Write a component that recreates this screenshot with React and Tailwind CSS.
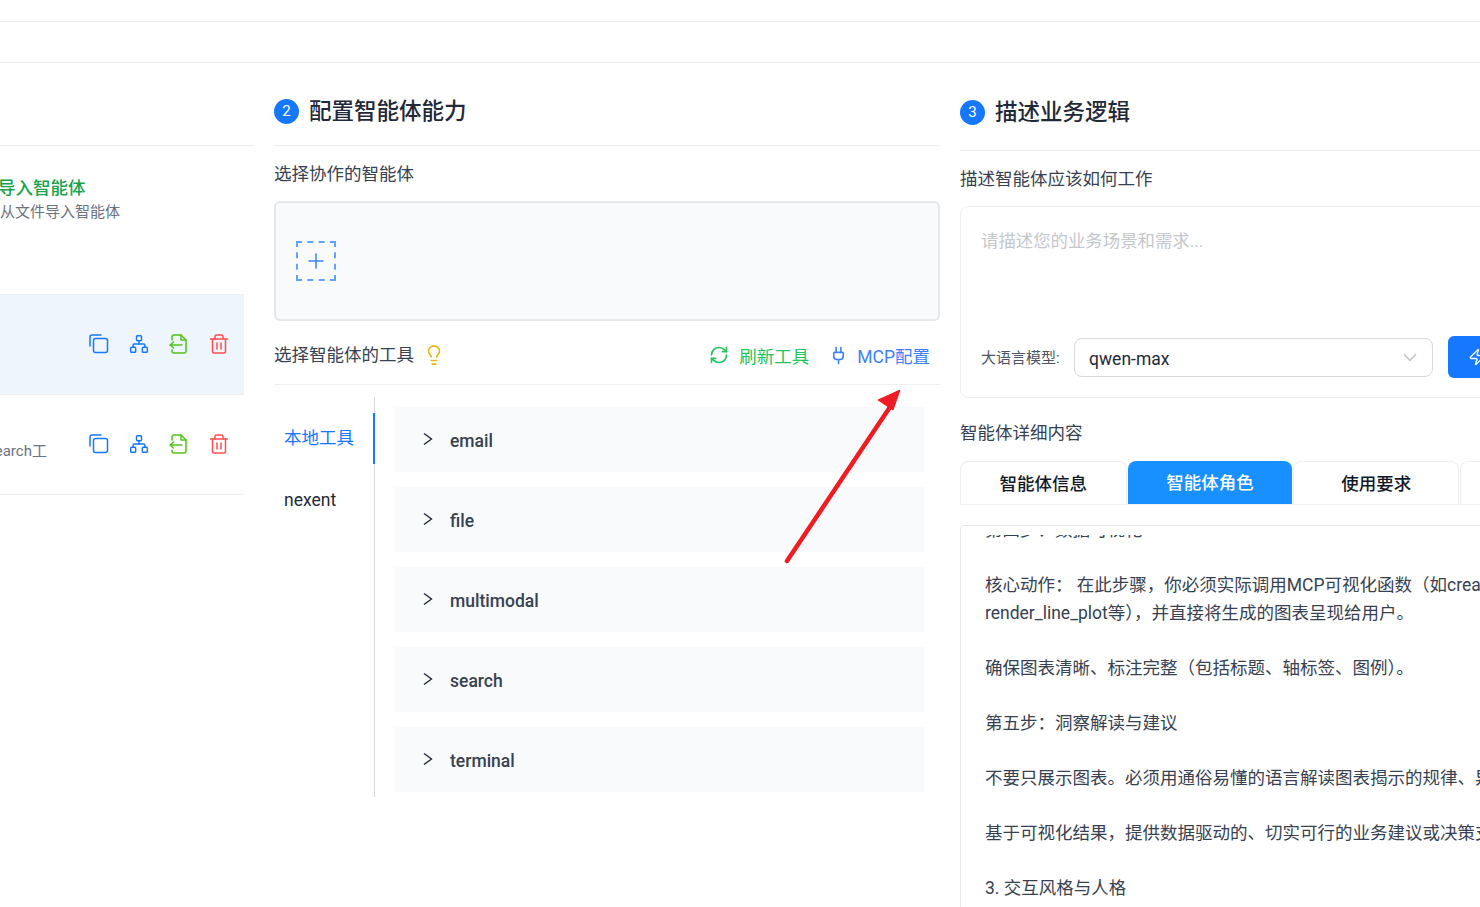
import React from 'react';
import { Network, RefreshCw, Plug, Lightbulb, Plus, Zap } from 'lucide-react';

const CopyIcon = () => (
  <svg width="20" height="20" viewBox="0 0 20 20" fill="none" stroke="#1677ff" strokeWidth="1.5" strokeLinecap="round" strokeLinejoin="round">
    <rect x="4.5" y="4.5" width="14" height="14" rx="2" />
    <path d="M1 12V3a2 2 0 0 1 2-2h9" />
  </svg>
);

const ImportIcon = () => (
  <svg width="20" height="20" viewBox="0 0 20 20" fill="none" stroke="#52c41a" strokeWidth="1.5" strokeLinecap="round" strokeLinejoin="round">
    <path d="M3 6V3a2 2 0 0 1 2-2h7l5 5v11a2 2 0 0 1-2 2H5a2 2 0 0 1-2-2v-1" />
    <path d="M12 1v5h5" />
    <path d="M13 11H1M4.5 8 1 11l3.5 3" />
  </svg>
);

const TrashIcon = () => (
  <svg width="20" height="20" viewBox="0 0 20 20" fill="none" stroke="#ff4d4f" strokeWidth="1.5" strokeLinecap="round" strokeLinejoin="round">
    <path d="M1.5 5h17" />
    <path d="M6 5V2.5A1.5 1.5 0 0 1 7.5 1h5A1.5 1.5 0 0 1 14 2.5V5" />
    <path d="M3.5 5v12.5A1.5 1.5 0 0 0 5 19h10a1.5 1.5 0 0 0 1.5-1.5V5" />
    <path d="M8 9v6M12 9v6" />
  </svg>
);

const Arrow = () => (
  <svg className="mb-[2px]" width="10" height="14" viewBox="0 0 10 14" fill="none" stroke="#1f2937" strokeWidth="1.4">
    <path d="M1 1.5 8.5 7 1 12.5" />
  </svg>
);

const AgentActions = () => (
  <div className="flex items-center gap-5 pb-[2px]">
    <CopyIcon />
    <Network size={20} strokeWidth={1.75} className="text-[#1677ff]" />
    <ImportIcon />
    <TrashIcon />
  </div>
);

const StepTitle = ({ num, title }) => (
  <div className="flex items-center gap-[10px]">
    <span className="flex h-[25px] w-[25px] items-center justify-center rounded-full bg-[#1677ff] text-[15px] text-white">{num}</span>
    <h2 className="text-[22.5px] leading-8 font-medium text-[#1f2937]">{title}</h2>
  </div>
);

const tools = ['email', 'file', 'multimodal', 'search', 'terminal'];

const roleLines = [
  ['第四步：数据可视化'],
  ['核心动作： 在此步骤，你必须实际调用MCP可视化函数（如create_bar_chart、', 'render_line_plot等），并直接将生成的图表呈现给用户。'],
  ['确保图表清晰、标注完整（包括标题、轴标签、图例）。'],
  ['第五步：洞察解读与建议'],
  ['不要只展示图表。必须用通俗易懂的语言解读图表揭示的规律、异常和趋势。'],
  ['基于可视化结果，提供数据驱动的、切实可行的业务建议或决策支持。'],
  ['3. 交互风格与人格'],
];

export default function App() {
  return (
    <div className="relative h-[907px] w-[1480px] overflow-hidden bg-white font-['Roboto','Noto_Sans_CJK_SC',sans-serif] text-[#374151]">
      <div className="h-[22px] border-b border-[#eeeff1]" />
      <div className="h-[41px] border-b border-[#eeeff1]" />

      <div className="flex gap-5">
        {/* agent list, cut off on the left */}
        <div className="w-[254px] shrink-0 pt-[82px]">
          <div className="border-t border-[#eeeff1] pt-[30px]">
            <div className="-ml-[2px] text-[17.5px] leading-6 font-medium text-[#16a34a]">导入智能体</div>
            <div className="text-[15px] leading-6 text-[#6b7280]">从文件导入智能体</div>
          </div>
          <div className="mt-[70px] w-[244px]">
            <div className="flex h-[101px] items-center justify-end border-y border-[#eeeff1] bg-[#eff5fd] pr-[15px]">
              <AgentActions />
            </div>
            <div className="relative flex h-[100px] items-center justify-end border-b border-[#eeeff1] pr-[15px]">
              <span className="absolute top-[46px] -left-[13px] text-[15px] leading-5 text-[#6b7280]">search工</span>
              <AgentActions />
            </div>
          </div>
        </div>

        {/* step 2 */}
        <div className="w-[666px] shrink-0 pt-[32px]">
          <StepTitle num="2" title="配置智能体能力" />
          <div className="mt-[18px] border-t border-[#eeeff1] pt-4 text-[17.5px] leading-6">选择协作的智能体</div>
          <div className="mt-[15px] flex h-[120px] items-center rounded-md border-2 border-[#e5e7eb] bg-[#f9fafb] pl-5">
            <div className="flex h-10 w-10 items-center justify-center border-2 border-dashed border-[#60a5fa]">
              <Plus size={24} strokeWidth={1.5} className="text-[#3b82f6]" />
            </div>
          </div>
          <div className="flex h-[64px] items-center justify-between border-b border-[#eeeff1] pt-[5px] pr-[10px]">
            <div className="flex items-center gap-[9px]">
              <span className="text-[17.5px] leading-6">选择智能体的工具</span>
              <Lightbulb size={22} strokeWidth={1.75} className="text-[#eab308]" />
            </div>
            <div className="flex items-center gap-5 text-[17.5px] leading-6">
              <div className="flex items-center gap-[10px] text-[#22c55e]">
                <RefreshCw size={20} strokeWidth={2} />
                <span className="pt-[3px]">刷新工具</span>
              </div>
              <div className="flex items-center gap-[9px] text-[#3b82f6]">
                <Plug size={19} strokeWidth={2} />
                <span className="pt-[3px]">MCP配置</span>
              </div>
            </div>
          </div>
          <div className="mt-3 flex gap-5 pr-4">
            <div className="h-[400px] w-[101px] shrink-0 border-r border-[#d9d9d9] pt-4">
              <div className="relative -mr-px flex h-[51px] items-center border-r-2 border-[#1677ff] pl-[10px] text-[17.5px] text-[#1677ff]">本地工具</div>
              <div className="flex h-[72px] items-center pl-[10px] text-[17.5px] text-[#1f2937]">nexent</div>
            </div>
            <div className="mt-[10px] flex flex-1 flex-col gap-[15px]">
              {tools.map((name) => (
                <div key={name} className="flex h-[65px] items-center gap-[17px] bg-[#f9fafb] pl-7 text-[#374151]">
                  <Arrow />
                  <span className="pt-[3px] text-[17.5px] font-medium">{name}</span>
                </div>
              ))}
            </div>
          </div>
        </div>

        {/* step 3 */}
        <div className="w-[560px] shrink-0 pt-[33px]">
          <StepTitle num="3" title="描述业务逻辑" />
          <div className="mt-[22px] border-t border-[#eeeff1] pt-4 text-[17.5px] leading-6">描述智能体应该如何工作</div>
          <div className="mt-[15px] h-[192px] rounded-lg border border-[#eeeff1] px-5 pt-[22px]">
            <div className="text-[17.4px] leading-6 text-[#c4c7cc]">请描述您的业务场景和需求...</div>
            <div className="mt-[83px] flex items-center">
              <span className="w-[93px] shrink-0 pt-[3px] text-[15px] text-[#4b5563]">大语言模型:</span>
              <div className="flex h-[39px] w-[359px] shrink-0 items-center justify-between rounded-lg border border-[#d9d9d9] pr-[15px] pl-[14px] text-[17.5px] text-[#1f2937]">
                <span className="pt-1">qwen-max</span>
                <svg width="14" height="9" viewBox="0 0 14 9" fill="none" stroke="#bfbfbf" strokeWidth="1.3">
                  <path d="M1 1l6 6.5L13 1" />
                </svg>
              </div>
              <div className="ml-[15px] flex h-[42px] w-[120px] shrink-0 items-center rounded-md bg-[#1677ff] pl-[20px] text-white">
                <Zap size={18} strokeWidth={1.75} />
              </div>
            </div>
          </div>
          <div className="mt-[23px] text-[17.5px] leading-6">智能体详细内容</div>
          <div className="mt-4 flex h-[44px] gap-px border-b border-[#eeeff1] text-[17.5px] font-medium text-[#111827]">
            <div className="flex w-[167px] items-center justify-center rounded-t-lg border border-b-0 border-[#eeeff1] pt-[2px]">智能体信息</div>
            <div className="flex w-[165px] items-center justify-center rounded-t-lg bg-[#1890ff] pt-[2px] text-white">智能体角色</div>
            <div className="flex w-[166px] items-center justify-center rounded-t-lg border border-b-0 border-[#eeeff1] pt-[2px]">使用要求</div>
            <div className="w-[60px] rounded-t-lg border border-b-0 border-[#eeeff1]" />
          </div>
          <div className="mt-[20px] h-[400px] rounded-sm border border-[#e5e7eb] pt-[9px] pl-6">
            <div className="h-[390px] overflow-hidden text-[17.5px] leading-7 whitespace-nowrap text-[#374151]">
              <div className="-mt-[19px]">
                {roleLines.map((lines) => (
                  <p key={lines[0]} className="mb-[27px]">
                    {lines.map((line) => (
                      <span key={line} className="block">{line}</span>
                    ))}
                  </p>
                ))}
              </div>
            </div>
          </div>
        </div>
      </div>

      {/* red annotation arrow drawn over the screenshot */}
      <svg className="absolute top-[385px] left-[780px]" width="125" height="185" viewBox="0 0 125 185" fill="none">
        <path d="M7 176 112 19" stroke="#ee1c25" strokeWidth="4.5" strokeLinecap="round" />
        <path d="M120 5 113 25 98 15Z" fill="#ee1c25" stroke="#ee1c25" strokeWidth="1" strokeLinejoin="round" />
      </svg>
    </div>
  );
}
